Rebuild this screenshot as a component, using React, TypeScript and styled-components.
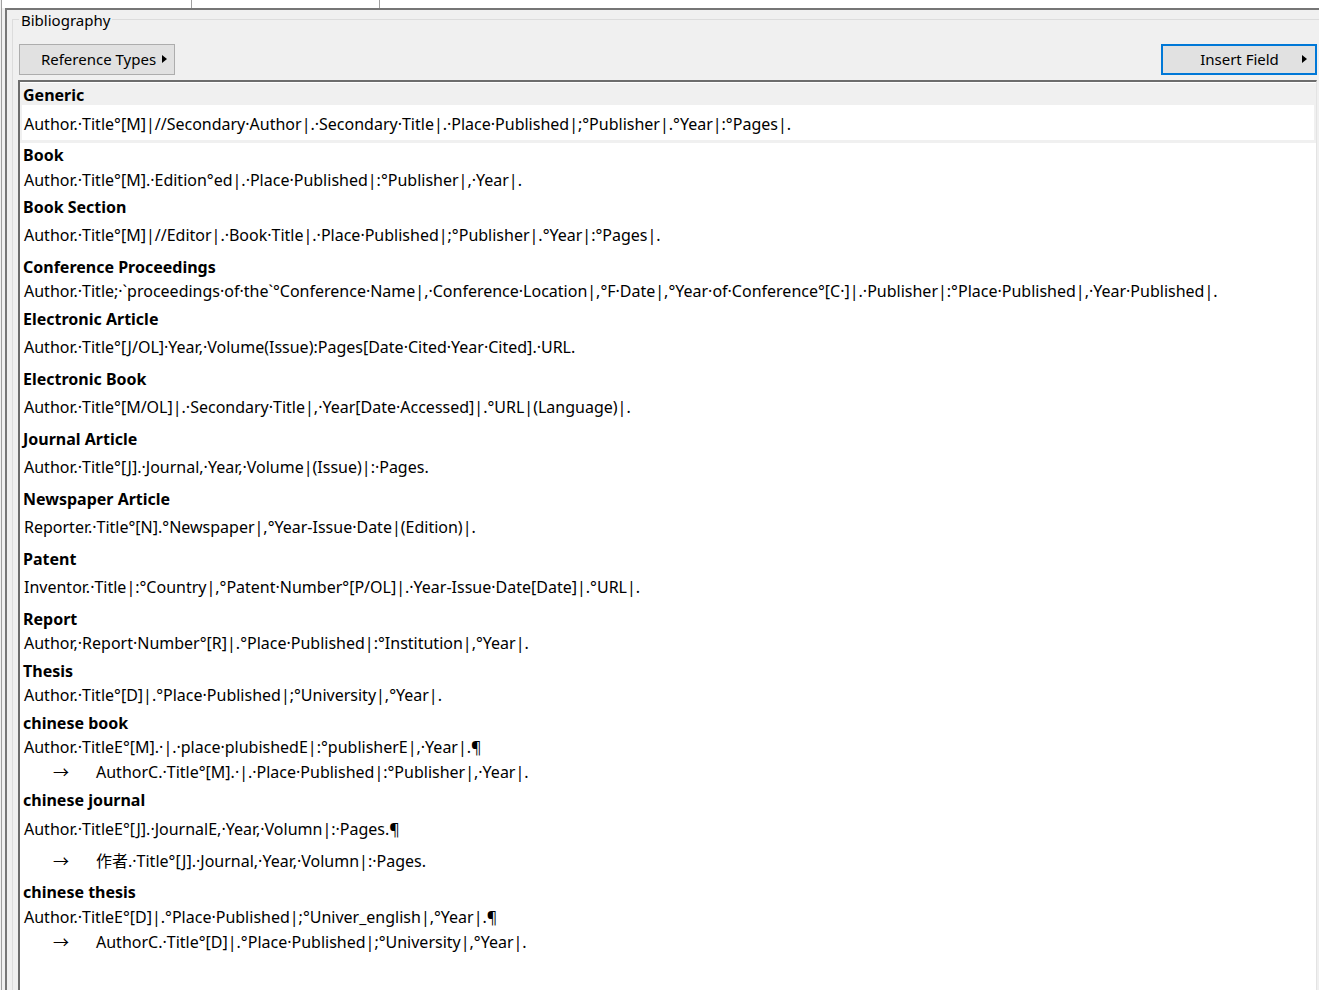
import React from "react";
import styled, { createGlobalStyle } from "styled-components";

const GlobalStyle = createGlobalStyle`
  html, body {
    margin: 0;
    padding: 0;
    background: #f0f0f0;
    overflow: hidden;
  }
  body {
    font-family: "Noto Sans", "Noto Sans CJK SC", sans-serif;
    color: #000;
  }
`;

const Window = styled.div`
  width: 1319px;
  height: 990px;
  overflow: hidden;
  background: #f0f0f0;
  padding-left: 1px;
  box-sizing: border-box;
  display: flex;
`;

const Frame = styled.div`
  flex: 1;
  border-left: 1px solid #a0a0a0;
  display: flex;
  flex-direction: column;
  min-width: 0;
`;

const TabStrip = styled.div`
  height: 8px;
  background: #fff;
  display: flex;
  flex-shrink: 0;
`;

const TabCell = styled.div<{ $w?: number }>`
  box-sizing: border-box;
  width: ${(p) => (p.$w ? `${p.$w}px` : "auto")};
  flex: ${(p) => (p.$w ? "none" : "1")};
  border-right: ${(p) => (p.$w ? "1px solid #a0a0a0" : "none")};
`;

const Panel = styled.div`
  flex: 1;
  margin-left: 3px;
  border-left: 2px solid #767676;
  border-top: 2px solid #767676;
  padding-left: 5px;
  min-height: 0;
`;

const GroupBox = styled.div`
  position: relative;
  margin-top: 9px;
  width: 1320px;
  height: 1000px;
  border: 1px solid #dcdcdc;
  padding: 24px 0 0 5px;
  box-sizing: border-box;
`;

const Legend = styled.span`
  position: absolute;
  top: -10px;
  left: 6px;
  padding: 0 2px;
  background: #f0f0f0;
  font-size: 15px;
  line-height: 20px;
`;

const Toolbar = styled.div`
  width: 1299px;
  height: 31px;
  display: flex;
  justify-content: space-between;
`;

const MenuButton = styled.div<{ $focused?: boolean }>`
  width: 156px;
  height: 31px;
  box-sizing: border-box;
  margin-left: ${(p) => (p.$focused ? "0" : "1px")};
  background: #e1e1e1;
  border: ${(p) => (p.$focused ? "2px solid #0078d7" : "1px solid #adadad")};
  display: flex;
  align-items: center;
  padding-left: ${(p) => (p.$focused ? "17px" : "18px")};
  padding-right: ${(p) => (p.$focused ? "8px" : "7px")};
  padding-bottom: 1px;
  font-size: 15px;
`;

const ButtonLabel = styled.span`
  flex: 1;
  text-align: center;
  white-space: nowrap;
`;

const Caret = styled.span`
  width: 0;
  height: 0;
  margin-left: 3px;
  border-left: 5px solid #000;
  border-top: 4px solid transparent;
  border-bottom: 4px solid transparent;
`;

const Editor = styled.div`
  margin-top: 5px;
  width: 1299px;
  height: 920px;
  box-sizing: border-box;
  background: #fff;
  border-left: 2px solid #6d6d6d;
  border-top: 2px solid #6d6d6d;
  border-right: 1px solid #e3e3e3;
  padding-top: 1px;
`;

const Entry = styled.div<{ $selected?: boolean }>`
  padding: 0 2px ${(p) => (p.$selected ? "3px" : "0")} 2px;
  background: ${(p) => (p.$selected ? "#f0f0f0" : "transparent")};
`;

const Heading = styled.div<{ $selected?: boolean }>`
  height: ${(p) => (p.$selected ? "22px" : "24px")};
  line-height: 24px;
  padding-left: 1px;
  font-size: 16px;
  font-weight: 700;
  white-space: nowrap;
`;

const Body = styled.div<{ $selected?: boolean }>`
  background: ${(p) => (p.$selected ? "#fff" : "transparent")};
  padding-left: 2px;
`;

const Line = styled.div<{ $h: number; $lh: number }>`
  height: ${(p) => p.$h}px;
  line-height: ${(p) => p.$lh}px;
  font-size: 16px;
  white-space: nowrap;
`;

const TabMark = styled.span`
  display: inline-block;
  width: 72px;
  padding-left: 29px;
  box-sizing: border-box;
`;

type LineSpec = { text: string; h: number; lh: number; tab?: boolean };
type EntrySpec = { name: string; lines: LineSpec[]; selected?: boolean };

const entries: EntrySpec[] = [
  {
    name: "Generic",
    selected: true,
    lines: [
      {
        text: "Author.·Title°[M]|//Secondary·Author|.·Secondary·Title|.·Place·Published|;°Publisher|.°Year|:°Pages|.",
        h: 35,
        lh: 38,
      },
    ],
  },
  {
    name: "Book",
    lines: [{ text: "Author.·Title°[M].·Edition°ed|.·Place·Published|:°Publisher|,·Year|.", h: 28, lh: 26 }],
  },
  {
    name: "Book Section",
    lines: [
      { text: "Author.·Title°[M]|//Editor|.·Book·Title|.·Place·Published|;°Publisher|.°Year|:°Pages|.", h: 36, lh: 32 },
    ],
  },
  {
    name: "Conference Proceedings",
    lines: [
      {
        text: "Author.·Title;·`proceedings·of·the`°Conference·Name|,·Conference·Location|,°F·Date|,°Year·of·Conference°[C·]|.·Publisher|:°Place·Published|,·Year·Published|.",
        h: 28,
        lh: 24,
      },
    ],
  },
  {
    name: "Electronic Article",
    lines: [
      { text: "Author.·Title°[J/OL]·Year,·Volume(Issue):Pages[Date·Cited·Year·Cited].·URL.", h: 36, lh: 32 },
    ],
  },
  {
    name: "Electronic Book",
    lines: [
      { text: "Author.·Title°[M/OL]|.·Secondary·Title|,·Year[Date·Accessed]|.°URL|(Language)|.", h: 36, lh: 32 },
    ],
  },
  {
    name: "Journal Article",
    lines: [{ text: "Author.·Title°[J].·Journal,·Year,·Volume|(Issue)|:·Pages.", h: 36, lh: 32 }],
  },
  {
    name: "Newspaper Article",
    lines: [{ text: "Reporter.·Title°[N].°Newspaper|,°Year-Issue·Date|(Edition)|.", h: 36, lh: 32 }],
  },
  {
    name: "Patent",
    lines: [
      { text: "Inventor.·Title|:°Country|,°Patent·Number°[P/OL]|.·Year-Issue·Date[Date]|.°URL|.", h: 36, lh: 32 },
    ],
  },
  {
    name: "Report",
    lines: [{ text: "Author,·Report·Number°[R]|.°Place·Published|:°Institution|,°Year|.", h: 28, lh: 24 }],
  },
  {
    name: "Thesis",
    lines: [{ text: "Author.·Title°[D]|.°Place·Published|;°University|,°Year|.", h: 28, lh: 24 }],
  },
  {
    name: "chinese book",
    lines: [
      { text: "Author.·TitleE°[M].·|.·place·plubishedE|:°publisherE|,·Year|.¶", h: 25, lh: 24 },
      { text: "AuthorC.·Title°[M].·|.·Place·Published|:°Publisher|,·Year|.", h: 28, lh: 24, tab: true },
    ],
  },
  {
    name: "chinese journal",
    lines: [
      { text: "Author.·TitleE°[J].·JournalE,·Year,·Volumn|:·Pages.¶", h: 33, lh: 34 },
      { text: "作者.·Title°[J].·Journal,·Year,·Volumn|:·Pages.", h: 35, lh: 32, tab: true },
    ],
  },
  {
    name: "chinese thesis",
    lines: [
      { text: "Author.·TitleE°[D]|.°Place·Published|;°Univer_english|,°Year|.¶", h: 25, lh: 26 },
      { text: "AuthorC.·Title°[D]|.°Place·Published|;°University|,°Year|.", h: 28, lh: 26, tab: true },
    ],
  },
];

export default function App() {
  return (
    <>
      <GlobalStyle />
      <Window>
        <Frame>
          <TabStrip>
            <TabCell $w={190} />
            <TabCell $w={188} />
            <TabCell />
          </TabStrip>
          <Panel>
            <GroupBox>
              <Legend>Bibliography</Legend>
              <Toolbar>
                <MenuButton>
                  <ButtonLabel>Reference Types</ButtonLabel>
                  <Caret />
                </MenuButton>
                <MenuButton $focused>
                  <ButtonLabel>Insert Field</ButtonLabel>
                  <Caret />
                </MenuButton>
              </Toolbar>
              <Editor>
                {entries.map((e) => (
                  <Entry key={e.name} $selected={e.selected}>
                    <Heading $selected={e.selected}>{e.name}</Heading>
                    <Body $selected={e.selected}>
                      {e.lines.map((l, i) => (
                        <Line key={i} $h={l.h} $lh={l.lh}>
                          {l.tab && <TabMark>→</TabMark>}
                          {l.text}
                        </Line>
                      ))}
                    </Body>
                  </Entry>
                ))}
              </Editor>
            </GroupBox>
          </Panel>
        </Frame>
      </Window>
    </>
  );
}
